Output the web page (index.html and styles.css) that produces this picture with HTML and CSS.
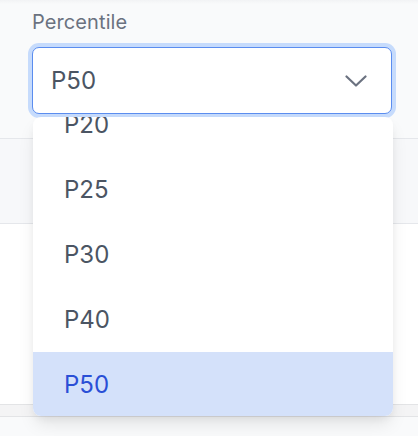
FILE: index.html
```html
<!DOCTYPE html>
<html lang="en">
<head>
<meta charset="utf-8">
<title>Percentile</title>
<link rel="stylesheet" href="styles.css">
</head>
<body>
<div class="page">
  <section class="filters">
    <label class="label">Percentile</label>
    <div class="select-wrap">
      <button class="select" type="button">
        <span class="select-value">P50</span>
        <svg class="chevron" width="22" height="12" viewBox="0 0 22 12" aria-hidden="true">
          <path d="M1.5 1.5 L11 10.5 L20.5 1.5" fill="none" stroke="#6b7280" stroke-width="2.2" stroke-linecap="round" stroke-linejoin="round"/>
        </svg>
      </button>
      <div class="menu">
        <ul class="options">
          <li class="option">P20</li>
          <li class="option">P25</li>
          <li class="option">P30</li>
          <li class="option">P40</li>
          <li class="option selected">P50</li>
        </ul>
      </div>
    </div>
  </section>
  <div class="row row-head"></div>
  <div class="row row-body"></div>
  <div class="row row-foot"></div>
</div>
</body>
</html>
```

FILE: styles.css
```css
* { box-sizing: border-box; }
html, body {
  margin: 0;
  padding: 0;
}
body {
  background: #f9fafb;
  font-family: Inter, "Noto Sans", "Liberation Sans", sans-serif;
}
.page {
  display: flex;
  flex-direction: column;
  min-height: 436px;
}
.filters {
  background: linear-gradient(#f2f3f5 0, #f9fafb 4px);
  padding: 8px 26px 0 32px;
  height: 139px;
  border-bottom: 1px solid #e5e7eb;
  display: flex;
  flex-direction: column;
}
.label {
  font-size: 20px;
  line-height: 28px;
  color: #6b7280;
  margin-bottom: 11px;
  letter-spacing: 0.1px;
}
.select-wrap {
  position: relative;
  width: 360px;
}
.select {
  width: 360px;
  height: 67px;
  display: flex;
  align-items: center;
  justify-content: space-between;
  padding: 0 24px 0 18px;
  background: #ffffff;
  border: 1px solid #5b8def;
  border-radius: 7px;
  box-shadow: 0 0 0 4px #c6dbfc;
  font-family: inherit;
  font-size: 24px;
  color: #4b5563;
  cursor: pointer;
}
.select-value { line-height: 1; }
.chevron { display: block; }
.menu {
  position: absolute;
  top: 70px;
  left: 1px;
  width: 360px;
  height: 299px;
  overflow: hidden;
  background: #ffffff;
  border-radius: 8px;
  box-shadow: 0 10px 18px -3px rgba(0,0,0,0.10), 0 4px 8px -2px rgba(0,0,0,0.06);
  z-index: 5;
}
.options {
  list-style: none;
  margin: -25px 0 0 0;
  padding: 0;
}
.option {
  height: 65px;
  display: flex;
  align-items: center;
  padding-left: 31px;
  font-size: 24px;
  color: #4b5563;
}
.option.selected {
  background: #d4e1fa;
  color: #2a4fd6;
}
.row-head {
  height: 85px;
  background: #f7f8fa;
  border-bottom: 1px solid #e5e7eb;
}
.row-body {
  height: 181px;
  background: #ffffff;
  border-bottom: 1px solid #e3e4e6;
}
.row-foot {
  height: 12px;
  background: #f4f4f5;
  border-bottom: 1px solid #e3e4e6;
}
```
